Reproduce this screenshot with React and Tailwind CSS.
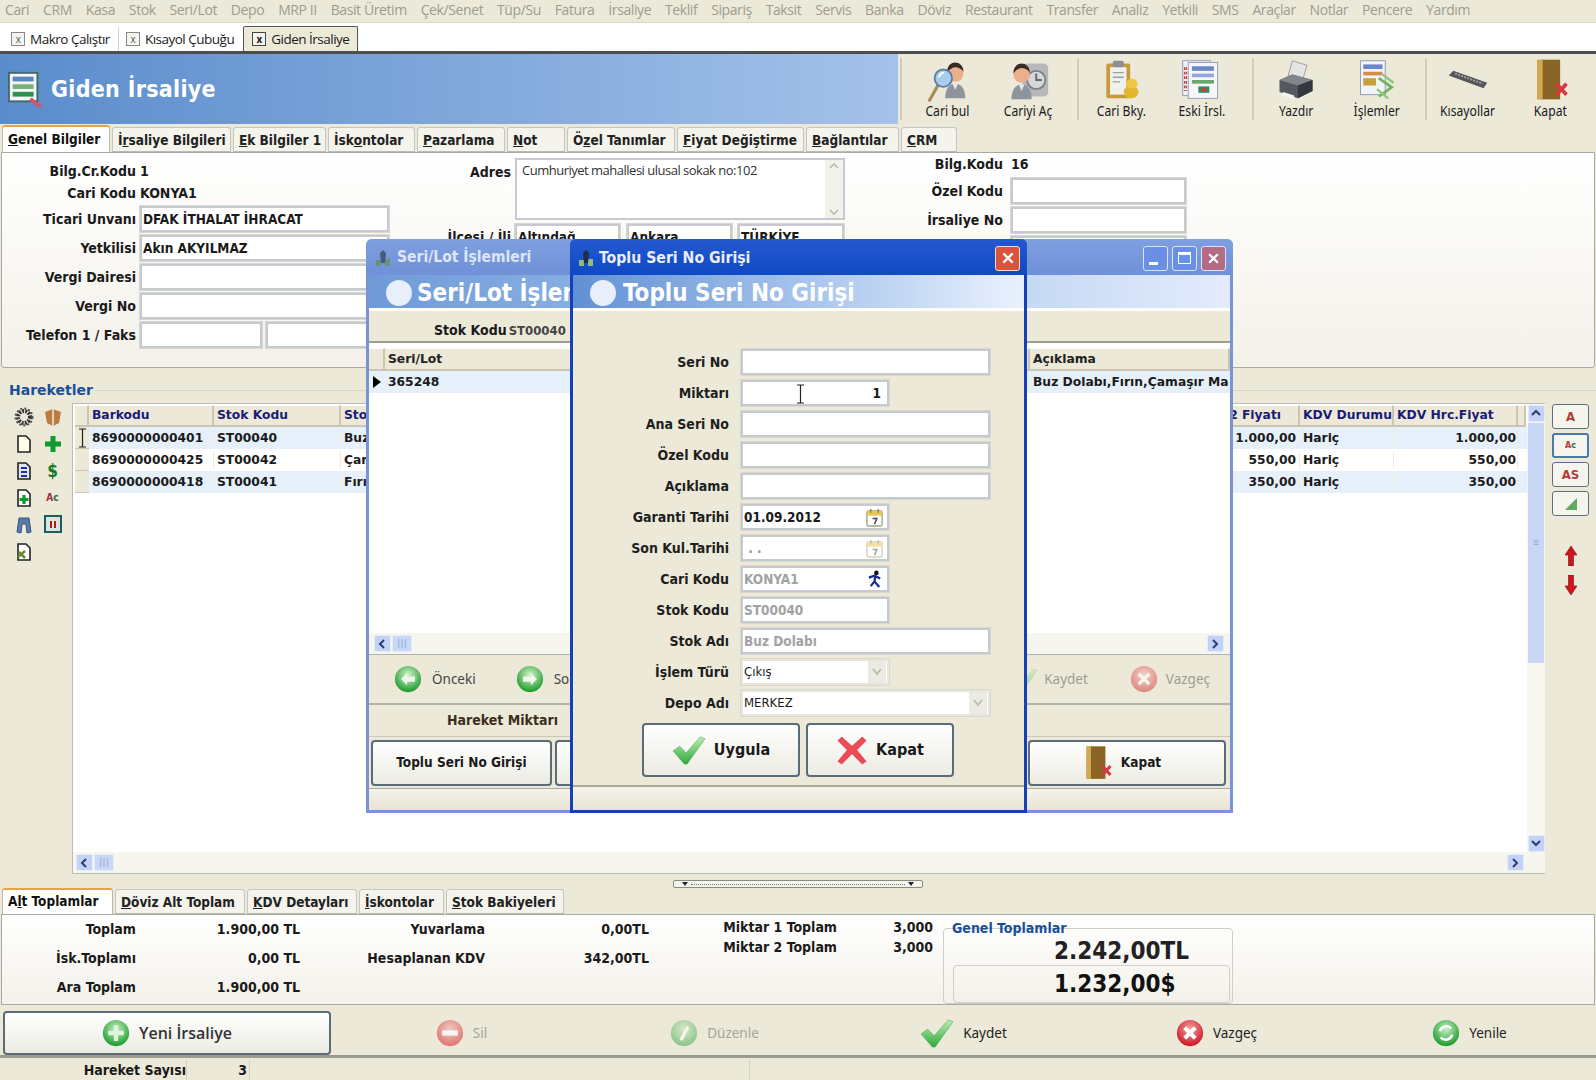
const menus = ["Cari", "CRM", "Kasa", "Stok", "Seri/Lot", "Depo", "MRP II", "Basit Üretim", "Çek/Senet", "Tüp/Su", "Fatura", "İrsaliye", "Teklif", "Sipariş", "Taksit", "Servis", "Banka", "Döviz", "Restaurant", "Transfer", "Analiz", "Yetkili", "SMS", "Araçlar", "Notlar", "Pencere", "Yardım"];

function Person({ x = 0, y = 0 }) {
  return (
    <g transform={`translate(${x} ${y})`}>
      <path d="M14 44c0-11 5-16 11-16s11 5 11 16z" fill="#8e949c" />
      <path d="M22 28l3 7 3-7z" fill="#e9e9e9" />
      <circle cx="25" cy="17" r="9" fill="#eab08c" />
      <path d="M16 16c0-8 5-11 9-11s9 3 9 10c-3-4-6-5-9-5s-6 2-9 6z" fill="#3a2a20" />
    </g>
  );
}

function IconPersonSearch() {
  return (
    <svg viewBox="0 0 48 48" className="w-[44px] h-[44px]">
      <Person x={8} y={0} />
      <path d="M5 46l9-16" stroke="#a98b5c" strokeWidth="3.5" strokeLinecap="round" />
      <circle cx="20" cy="22" r="9.5" fill="#a9cdf0" stroke="#5e7fa5" strokeWidth="2" />
      <path d="M15 21c1-3 3-5 6-5" stroke="#fff" strokeWidth="2" fill="none" />
    </svg>
  );
}

function IconPersonSafe() {
  return (
    <svg viewBox="0 0 48 48" className="w-[44px] h-[44px]">
      <rect x="18" y="6" width="28" height="36" rx="5" fill="#b6b8bc" />
      <circle cx="33" cy="24" r="10" fill="#d5d7da" stroke="#7d8187" strokeWidth="2" />
      <path d="M33 17v7h6" stroke="#666" strokeWidth="2" fill="none" />
      <Person x={-8} y={1} />
    </svg>
  );
}

function IconClipboard() {
  return (
    <svg viewBox="0 0 48 48" className="w-[44px] h-[44px]">
      <rect x="8" y="6" width="26" height="38" rx="2" fill="#c79a3a" />
      <rect x="12" y="10" width="18" height="30" fill="#f1f1ec" />
      <rect x="15" y="3" width="12" height="7" rx="2" fill="#8a8f96" />
      <path d="M15 16h12M15 21h12M15 26h8" stroke="#9aa0a8" strokeWidth="1.5" />
      <ellipse cx="35" cy="37" rx="8" ry="7" fill="#e3b62f" />
      <ellipse cx="36" cy="28" rx="6" ry="5.5" fill="#eec644" />
    </svg>
  );
}

function IconDocs() {
  return (
    <svg viewBox="0 0 48 48" className="w-[44px] h-[44px]">
      <rect x="3" y="3" width="30" height="38" fill="#f1f2f6" stroke="#8d97b5" />
      <rect x="9" y="5" width="32" height="39" fill="#f7f7fb" stroke="#8d97b5" />
      <path d="M5 10v26M7 10v26" stroke="#c63d3d" strokeWidth="1.5" strokeDasharray="3 2" />
      <rect x="13" y="9" width="24" height="5" fill="#6c86c9" />
      <rect x="13" y="17" width="24" height="4" fill="#8fa7dd" />
      <rect x="13" y="24" width="24" height="4" fill="#6aa86a" />
      <rect x="20" y="31" width="12" height="7" fill="#2f8f55" />
      <rect x="23" y="33" width="6" height="3" fill="#d13a3a" />
    </svg>
  );
}

function IconPrinter() {
  return (
    <svg viewBox="0 0 48 48" className="w-[44px] h-[44px]">
      <path d="M20 3l16 5-5 17-16-4z" fill="#e4e4e4" stroke="#999" />
      <path d="M6 24l14-6 22 6v12l-16 8-20-7z" fill="#55585d" />
      <path d="M6 24l20 6 16-6-22-6z" fill="#82868c" />
      <path d="M26 30v14l16-8V24z" fill="#34373b" />
      <path d="M10 37l12 4 0 4-14-4z" fill="#f2f2f2" />
    </svg>
  );
}

function IconTasks() {
  return (
    <svg viewBox="0 0 48 48" className="w-[44px] h-[44px]">
      <rect x="6" y="3" width="27" height="37" fill="#f3f4f9" stroke="#8d97b5" />
      <rect x="9" y="7" width="21" height="5" fill="#6c86c9" />
      <rect x="9" y="15" width="21" height="4" fill="#d58b4c" />
      <rect x="9" y="22" width="14" height="8" fill="#c9a13c" />
      <path d="M26 22l14 10-14 10" stroke="#6fb45e" strokeWidth="3" fill="none" />
      <path d="M30 18l12 9M24 34l12 10" stroke="#8bc87b" strokeWidth="2.5" />
    </svg>
  );
}

function IconKeyboard() {
  return (
    <svg viewBox="0 0 48 48" className="w-[44px] h-[44px]">
      <path d="M3 19l5-5 37 13-4 6z" fill="#55555a" />
      <path d="M10 17l30 11" stroke="#a5a5aa" strokeWidth="2" strokeDasharray="2 1.5" />
    </svg>
  );
}

function IconDoor({ size = "w-[44px] h-[44px]" }) {
  return (
    <svg viewBox="0 0 48 48" className={size}>
      <rect x="10" y="2" width="25" height="43" fill="#b58a3a" />
      <rect x="14" y="2" width="21" height="43" fill="#8a6424" />
      <rect x="10" y="2" width="6" height="43" fill="#d2a850" />
      <path d="M31 28l11 12M42 28L31 40" stroke="#d8373f" strokeWidth="4" />
    </svg>
  );
}

function Ball({ id, from, to, children, size = "w-[28px] h-[28px]" }) {
  return (
    <svg viewBox="0 0 32 32" className={size}>
      <defs>
        <radialGradient id={id} cx="50%" cy="35%" r="65%">
          <stop offset="0%" stopColor={from} />
          <stop offset="100%" stopColor={to} />
        </radialGradient>
      </defs>
      <circle cx="16" cy="16" r="15" fill={`url(#${id})`} />
      {children}
    </svg>
  );
}

function IconCheck({ id, size = "w-[34px] h-[30px]", dim }) {
  return (
    <svg viewBox="0 0 36 32" className={`${size} ${dim ? "opacity-40" : ""}`}>
      <defs>
        <linearGradient id={id} x1="0" y1="0" x2="0" y2="1">
          <stop offset="0%" stopColor="#b9eeb0" />
          <stop offset="100%" stopColor="#2fa83c" />
        </linearGradient>
      </defs>
      <path d="M1 17l7-5 7 7L30 2l5 2-19 27h-3z" fill={`url(#${id})`} stroke="#4aa552" strokeWidth="0.6" />
    </svg>
  );
}

function IconBigX() {
  return (
    <svg viewBox="0 0 32 32" className="w-[32px] h-[30px]">
      <path d="M5 2l11 10L27 2l4 4-10 10 10 12-4 3-11-11L5 31l-4-3 10-12L1 6z" fill="#ee4a55" stroke="#c9343f" strokeWidth="0.6" />
    </svg>
  );
}

function MiniDoc({ fill = "#fff", stroke = "#222", children }) {
  return (
    <svg viewBox="0 0 20 20" className="w-[20px] h-[20px]">
      <path d="M4 2h8l4 4v12H4z" fill={fill} stroke={stroke} strokeWidth="1.6" />
      {children}
    </svg>
  );
}

function Sidebar() {
  return (
    <div className="w-[72px] shrink-0 grid grid-cols-2 content-start justify-items-center gap-y-[7px] pl-[9px] pr-[5px] pt-[4px]">
      <svg viewBox="0 0 20 20" className="w-[20px] h-[20px]">
        <circle cx="10" cy="10" r="6" fill="none" stroke="#333" strokeWidth="4" strokeDasharray="2 1.2" />
        <circle cx="10" cy="10" r="8.5" fill="none" stroke="#555" strokeWidth="2" strokeDasharray="2 2" />
      </svg>
      <svg viewBox="0 0 20 20" className="w-[20px] h-[20px]">
        <path d="M2 5l8-3 8 3-2 11-6 3-6-3z" fill="#b97c45" />
        <path d="M10 2v17" stroke="#ead0ac" strokeWidth="2" />
      </svg>
      <MiniDoc fill="#fffde8" />
      <svg viewBox="0 0 20 20" className="w-[20px] h-[20px]">
        <path d="M10 2v16M2 10h16" stroke="#0d9a2e" strokeWidth="5" />
      </svg>
      <MiniDoc fill="#dfe5fb">
        <path d="M7 7h6M7 11h6M7 15h6" stroke="#1f2f9e" strokeWidth="2" />
      </MiniDoc>
      <div className="font-bold text-[17px] leading-[20px] text-[#157a2b]">$</div>
      <MiniDoc>
        <path d="M10 7v9M5.5 11.5h9" stroke="#0d9a2e" strokeWidth="3.2" />
      </MiniDoc>
      <div className="text-[10px] leading-[20px] font-bold text-[#9b2c3a] whitespace-nowrap">A<span className="text-[#2b6b4a]">c</span></div>
      <svg viewBox="0 0 20 20" className="w-[20px] h-[20px]">
        <path d="M5 3h10l2 14-4 1-1-9H8l-1 9-4-1z" fill="#5c7bab" stroke="#37527c" />
      </svg>
      <div className="w-[18px] h-[18px] border-2 border-[#1c5b60] bg-[#d9e6dd] flex items-center justify-center gap-[2px]">
        <span className="w-[2px] h-[7px] bg-[#b5181b]" />
        <span className="w-[2px] h-[7px] bg-[#b5181b]" />
      </div>
      <MiniDoc>
        <path d="M5 10l6 6M4 15l7-6" stroke="#6c8a2c" strokeWidth="2.5" />
      </MiniDoc>
    </div>
  );
}

function Tab({ active, w, children, h = "h-[27px]" }) {
  return (
    <div
      className={`${w} ${active ? h : "h-[25px]"} shrink-0 flex items-center pl-[5px] text-[13.5px] font-bold whitespace-nowrap overflow-hidden rounded-t-[3px] border ${
        active
          ? "bg-white border-b-0 border-[#b9b9ac] border-t-[#e8a33c] border-t-2 text-[#111] pb-[1px]"
          : "bg-[#f4f3ec] border-[#c4c6c4] border-b-[#b9bbb6] text-[#222] mt-auto pt-[2px]"
      }`}
    >
      {children}
    </div>
  );
}

function Field({ w = "w-[249px]", children, cls = "", right }) {
  return (
    <div className={`${w} h-[26px] shrink-0 bg-white border-2 border-[#c5cad0] outline outline-[#d8d8cf] flex items-center justify-between px-[1px] text-[13.5px] font-bold overflow-hidden whitespace-nowrap ${cls}`}>
      <span className="truncate">{children}</span>
      {right}
    </div>
  );
}

function FormRow({ label, children, labelW = "w-[134px]", h = "h-[29px]" }) {
  return (
    <div className={`${h} flex items-center gap-[4px]`}>
      <div className={`${labelW} shrink-0 text-right text-[14px] font-bold whitespace-nowrap`}>{label}</div>
      {children}
    </div>
  );
}

function IconCalendar({ dim }) {
  return (
    <svg viewBox="0 0 18 20" className={`w-[17px] h-[19px] shrink-0 mr-[3px] ${dim ? "opacity-50" : ""}`}>
      <rect x="1" y="3" width="16" height="16" rx="1.5" fill="#fff" stroke="#a5a77f" strokeWidth="1.5" />
      <rect x="1" y="3" width="16" height="5" fill="#e6c653" />
      <path d="M5 1v4M13 1v4" stroke="#8a8a60" strokeWidth="1.6" />
      <path d="M7 11h4.5L9 17" stroke="#444" strokeWidth="1.5" fill="none" />
    </svg>
  );
}

function IconRunner() {
  return (
    <svg viewBox="0 0 18 20" className="w-[17px] h-[19px] shrink-0 mr-[3px]">
      <circle cx="11" cy="3" r="2.4" fill="#111" />
      <path d="M10 6l-1 6-4 5M9 12l5 6M3 8l6-2 6 3" stroke="#172c8c" strokeWidth="2.4" fill="none" />
    </svg>
  );
}

function Chevron() {
  return (
    <div className="w-[18px] h-[22px] shrink-0 bg-[#ecebe3] flex items-center justify-center text-[#b9bcb3]">
      <svg viewBox="0 0 10 8" className="w-[10px] h-[8px]">
        <path d="M1 1l4 5 4-5" stroke="currentColor" strokeWidth="1.8" fill="none" />
      </svg>
    </div>
  );
}

function TextCursor({ cls = "" }) {
  return (
    <svg viewBox="0 0 9 20" className={`w-[9px] h-[20px] ${cls}`}>
      <path d="M1 1h3l.5 1L5 1h3M4.5 2v16M1 19h3l.5-1 .5 1h3" stroke="#222" strokeWidth="1.2" fill="none" />
    </svg>
  );
}

function Cell({ w, right, cls = "", children }) {
  return (
    <div className={`${w} shrink-0 px-[3px] overflow-hidden whitespace-nowrap border-r border-[#efece0] ${right ? "text-right" : ""} ${cls}`}>
      {children}
    </div>
  );
}

function Hdr({ w, children, cls = "" }) {
  return (
    <div className={`${w} shrink-0 h-full bg-[#ece9d8] border-r-2 border-b-2 border-[#c9c6b4] border-t border-t-white pl-[3px] flex items-center overflow-hidden whitespace-nowrap ${cls}`}>
      {children}
    </div>
  );
}

const rows = [
  { bar: "8690000000401", kod: "ST00040", ad: "Buz Dolabı", fiyat: "1.000,00", bg: "bg-[#e6f0fa]", cursor: true },
  { bar: "8690000000425", kod: "ST00042", ad: "Çamaşır Makinesi", fiyat: "550,00", bg: "bg-white" },
  { bar: "8690000000418", kod: "ST00041", ad: "Fırın", fiyat: "350,00", bg: "bg-[#e6f0fa]" },
];

function ScrollArrow({ dir }) {
  const d = { left: "M6 1L2 5l4 4", right: "M2 1l4 4-4 4", up: "M1 6l4-4 4 4", down: "M1 2l4 4 4-4" }[dir];
  return (
    <div className="w-[17px] h-[17px] shrink-0 rounded-[2px] bg-[#c3d3f5] border border-[#e4ecfb] flex items-center justify-center">
      <svg viewBox="0 0 10 10" className="w-[10px] h-[10px]">
        <path d={d} stroke="#2a3f78" strokeWidth="2" fill="none" />
      </svg>
    </div>
  );
}

function Thumb() {
  return (
    <div className="w-[20px] h-[17px] shrink-0 rounded-[2px] bg-[#c9d8f6] border border-[#e4ecfb] flex items-center justify-center text-[9px] leading-none text-[#9bb0dc]">|||</div>
  );
}

function Grid() {
  return (
    <div className="flex-1 min-w-0 flex flex-col bg-white border border-[#b9bdb8] border-r-0 font-['DejaVu_Sans',sans-serif] text-[12.3px] font-bold">
      <div className="flex flex-1 min-h-0">
        <div className="flex-1 min-w-0 pl-[2px] pt-[1px] overflow-hidden">
          <div className="h-[22px] flex text-[#1a1a78]">
            <Hdr w="w-[14px]" />
            <Hdr w="w-[125px]">Barkodu</Hdr>
            <Hdr w="w-[127px]">Stok Kodu</Hdr>
            <Hdr w="w-[861px]">Stok Adı</Hdr>
            <Hdr w="w-[98px]" cls="justify-end pr-[17px]">2 Fiyatı</Hdr>
            <Hdr w="w-[94px]">KDV Durumu</Hdr>
            <Hdr w="w-[124px]">KDV Hrc.Fiyat</Hdr>
            <Hdr w="w-[8px]" />
          </div>
          {rows.map((r) => (
            <div key={r.bar} className={`h-[22px] flex items-center text-[#1b1b1b] ${r.bg}`}>
              <div className="w-[14px] h-full shrink-0 bg-[#ece9d8] border-b border-[#c9c6b4] flex items-center justify-center">
                {r.cursor && <TextCursor />}
              </div>
              <Cell w="w-[125px]">{r.bar}</Cell>
              <Cell w="w-[127px]">{r.kod}</Cell>
              <Cell w="w-[861px]">{r.ad}</Cell>
              <Cell w="w-[98px]" right>{r.fiyat}</Cell>
              <Cell w="w-[94px]">Hariç</Cell>
              <Cell w="w-[124px]" right cls="pr-[1px]">{r.fiyat}</Cell>
            </div>
          ))}
        </div>
        <div className="w-[18px] shrink-0 bg-[#f7f6f0] flex flex-col items-center pt-[1px]">
          <ScrollArrow dir="up" />
          <div className="w-[16px] h-[240px] my-[1px] bg-[#c7d7f5] flex items-center justify-center text-[#9bb0dc] text-[8px]">≡</div>
          <div className="flex-1" />
          <ScrollArrow dir="down" />
        </div>
      </div>
      <div className="h-[21px] shrink-0 bg-[#f6f5ee] flex items-center pl-[3px] pr-[21px] gap-[1px]">
        <ScrollArrow dir="left" />
        <Thumb />
        <div className="flex-1" />
        <ScrollArrow dir="right" />
      </div>
    </div>
  );
}

function SideButton({ children, focus }) {
  return (
    <div className={`w-[37px] h-[25px] rounded-[3px] bg-[#f5f5ee] border ${focus ? "border-2 border-[#4b79b0]" : "border-[#5f6f80]"} flex items-center justify-center font-bold text-[13px] text-[#b33a3a]`}>
      {children}
    </div>
  );
}

function ToolItem({ icon, label, w }) {
  return (
    <div className={`${w} shrink-0 flex flex-col items-center`}>
      <div className="h-[44px] flex items-center">{icon}</div>
      <div className="text-[13.5px] leading-[18px] text-[#1a1a1a] whitespace-nowrap font-['Noto_Sans',sans-serif] scale-x-90">{label}</div>
    </div>
  );
}

function ActionBtn({ icon, label, dim }) {
  return (
    <div className={`flex items-center justify-center gap-[9px] ${dim ? "pl-[8px]" : ""}`}>
      {icon}
      <span className={`text-[13.5px] font-['Noto_Sans',sans-serif] ${dim ? "text-[#a5a59a]" : "text-[#222]"}`}>{label}</span>
    </div>
  );
}

function BevelBtn({ cls, children }) {
  return (
    <div className={`rounded-[4px] border-2 border-[#5b6b78] bg-gradient-to-b from-white to-[#ecebe3] flex items-center justify-center ${cls}`}>
      {children}
    </div>
  );
}

function SeriLotWindow() {
  return (
    <div className="absolute left-[366px] top-[239px] w-[867px] h-[574px] flex flex-col rounded-t-[6px] bg-[#ece9d8] border-[3px] border-t-0 border-[#7b93d6] font-bold">
      <div className="h-[36px] shrink-0 -mx-[3px] rounded-t-[6px] bg-gradient-to-b from-[#7e9fe0] to-[#7090d8] flex items-center pl-[7px] pt-[2px] gap-[4px]">
        <svg viewBox="0 0 20 20" className="w-[20px] h-[20px] opacity-80">
          <path d="M3 18v-6h5v6zM12 18v-7h5v7z" fill="#6e8f5e" />
          <path d="M10 2l3 3-1 10H8L7 5z" fill="#3b4b6a" />
        </svg>
        <span className="text-[15.5px] text-[#dde6f8]">Seri/Lot İşlemleri</span>
        <div className="ml-auto flex gap-[4px] pr-[7px]">
          <div className="w-[25px] h-[25px] rounded-[3px] bg-[#6a8fe6] border border-[#dbe4f8] flex items-end p-[5px]"><span className="w-[9px] h-[3px] bg-white" /></div>
          <div className="w-[25px] h-[25px] rounded-[3px] bg-[#6a8fe6] border border-[#dbe4f8] flex items-center justify-center"><span className="w-[13px] h-[12px] border border-t-[3px] border-white" /></div>
          <div className="w-[25px] h-[25px] rounded-[3px] bg-[#b26c85] border border-[#dbe4f8] flex items-center justify-center">
            <svg viewBox="0 0 12 12" className="w-[13px] h-[13px]"><path d="M2 2l8 8M10 2l-8 8" stroke="#fff" strokeWidth="2" /></svg>
          </div>
        </div>
      </div>
      <div className="h-[33px] shrink-0 bg-gradient-to-r from-[#6e9bd8] via-[#a4c3ec] to-[#e4ecfc] flex items-center pl-[17px] pt-[3px] gap-[5px] text-white text-[24px]">
        <span className="w-[26px] h-[26px] rounded-full bg-[#e8eefa]" />
        Seri/Lot İşlemleri
      </div>
      <div className="h-[3px] shrink-0 bg-white" />
      <div className="h-[32px] shrink-0 flex items-center pl-[65px] pt-[9px] gap-[2px] text-[14px] border-b-2 border-[#9d9d92]">
        Stok Kodu <span className="text-[13px] text-[#444]">ST00040</span>
      </div>
      <div className="flex-1 min-h-0 bg-white flex flex-col pt-[2px] font-['DejaVu_Sans',sans-serif] text-[12.3px] text-[#1b1b1b]">
        <div className="h-[26px] flex text-[#222] pt-[3px]">
          <Hdr w="w-[16px]" />
          <Hdr w="w-[645px]">Seri/Lot</Hdr>
          <Hdr w="flex-1">Açıklama</Hdr>
        </div>
        <div className="h-[22px] flex items-center bg-[#e6f0fa]">
          <div className="w-[16px] shrink-0 flex justify-center">
            <span className="w-0 h-0 border-y-[6px] border-y-transparent border-l-[8px] border-l-black" />
          </div>
          <div className="w-[645px] shrink-0 pl-[3px]">365248</div>
          <div className="flex-1 min-w-0 pl-[3px] whitespace-nowrap">Buz Dolabı,Fırın,Çamaşır Ma</div>
        </div>
        <div className="flex-1" />
        <div className="h-[22px] bg-[#f6f5ee] flex items-center pl-[5px] pr-[6px] gap-[1px] border-b border-[#aeb3b3]">
          <ScrollArrow dir="left" />
          <Thumb />
          <div className="flex-1" />
          <ScrollArrow dir="right" />
        </div>
      </div>
      <div className="h-[50px] shrink-0 flex items-center border-b-2 border-[#b3b2a6] font-normal text-[13.5px] font-['Noto_Sans',sans-serif] text-[#444]">
        <div className="w-[25px]" />
        <Ball id="prev" from="#d6f3cd" to="#179a2a"><path d="M8 16l7-7v4h9v6h-9v4z" fill="#eef8ea" /></Ball>
        <span className="ml-[10px]">Önceki</span>
        <div className="w-[40px]" />
        <Ball id="next" from="#d6f3cd" to="#179a2a"><path d="M24 16l-7-7v4H8v6h9v4z" fill="#eef8ea" /></Ball>
        <span className="ml-[10px]">Sonraki</span>
        <div className="flex-1" />
        <IconCheck id="ck2" size="w-[26px] h-[24px]" dim />
        <span className="ml-[6px] text-[#9d9d92]">Kaydet</span>
        <div className="w-[42px]" />
        <div className="opacity-50"><Ball id="vz2" from="#f5b4b4" to="#d22a2a"><path d="M10 10l12 12M22 10L10 22" stroke="#fff" strokeWidth="4" /></Ball></div>
        <span className="ml-[8px] mr-[20px] text-[#9d9d92]">Vazgeç</span>
      </div>
      <div className="h-[31px] shrink-0 flex items-center pl-[78px] text-[14px] text-[#3b2f1c]">Hareket Miktarı</div>
      <div className="h-[52px] shrink-0 flex items-center px-[2px] gap-[3px] font-['DejaVu_Sans_Condensed',sans-serif] border-t border-[#c9c8bb]">
        <BevelBtn cls="w-[181px] h-[46px] border-[#3b6ea8] text-[13.5px]">Toplu Seri No Girişi</BevelBtn>
        <BevelBtn cls="w-[100px] h-[46px]"> </BevelBtn>
        <div className="flex-1" />
        <BevelBtn cls="w-[198px] h-[46px] text-[13.5px] gap-[6px] pr-[14px] mr-[2px]"><IconDoor size="w-[36px] h-[36px]" />Kapat</BevelBtn>
      </div>
      <div className="h-[22px] shrink-0 border-t border-[#aaa99e] bg-gradient-to-b from-[#f4f3ec] to-[#e7e4d3]" />
    </div>
  );
}

function DialogRow({ label, children }) {
  return (
    <div className="h-[26px] flex items-center">
      <div className="w-[156px] shrink-0 text-right text-[14px] font-bold text-[#1e1e1e] whitespace-nowrap">{label}</div>
      <div className="ml-[12px]">{children}</div>
    </div>
  );
}

function TopluWindow() {
  return (
    <div className="absolute left-[570px] top-[239px] w-[457px] h-[574px] flex flex-col rounded-t-[6px] bg-[#ece9d8] border-[3px] border-t-0 border-[#1541b8]">
      <div className="h-[36px] shrink-0 -mx-[3px] rounded-t-[6px] bg-gradient-to-b from-[#2458cf] to-[#0f49c4] flex items-center pl-[6px] pr-[7px] pt-[2px] gap-[3px]">
        <svg viewBox="0 0 20 20" className="w-[20px] h-[20px]">
          <path d="M3 18v-6h5v6zM12 18v-7h5v7z" fill="#8fbc7e" />
          <path d="M10 2l3 3-1 10H8L7 5z" fill="#1f2c4a" />
        </svg>
        <span className="text-[15.7px] font-bold text-[#e8eefc]">Toplu Seri No Girişi</span>
        <div className="ml-auto w-[25px] h-[25px] rounded-[3px] bg-[#d8553c] border border-[#f4d8cc] flex items-center justify-center">
          <svg viewBox="0 0 12 12" className="w-[14px] h-[14px]"><path d="M2 2l8 8M10 2l-8 8" stroke="#fff" strokeWidth="2" /></svg>
        </div>
      </div>
      <div className="h-[33px] shrink-0 bg-gradient-to-r from-[#6191d4] via-[#a4c3ec] to-[#eaf1fd] flex items-center pl-[17px] pt-[3px] gap-[7px] text-white text-[24px] font-bold">
        <span className="w-[26px] h-[26px] rounded-full bg-[#e8eefa]" />
        Toplu Seri No Girişi
      </div>
      <div className="h-[3px] shrink-0 bg-white" />
      <div className="flex-1 flex flex-col gap-[5px] pt-[38px]">
        <DialogRow label="Seri No"><Field /></DialogRow>
        <DialogRow label="Miktarı">
          <div className="relative">
            <Field w="w-[148px]" cls="justify-end pr-[6px]">1</Field>
            <TextCursor cls="absolute left-[55px] top-[4px]" />
          </div>
        </DialogRow>
        <DialogRow label="Ana Seri No"><Field /></DialogRow>
        <DialogRow label="Özel Kodu"><Field /></DialogRow>
        <DialogRow label="Açıklama"><Field /></DialogRow>
        <DialogRow label="Garanti Tarihi"><Field w="w-[148px]" right={<IconCalendar />}>01.09.2012</Field></DialogRow>
        <DialogRow label="Son Kul.Tarihi"><Field w="w-[148px]" cls="text-[#999]" right={<IconCalendar dim />}>&nbsp;. .</Field></DialogRow>
        <DialogRow label="Cari Kodu"><Field w="w-[148px]" cls="text-[#a2a2a2]" right={<IconRunner />}>KONYA1</Field></DialogRow>
        <DialogRow label="Stok Kodu"><Field w="w-[148px]" cls="text-[#a2a2a2]">ST00040</Field></DialogRow>
        <DialogRow label="Stok Adı"><Field cls="text-[#a2a2a2]">Buz Dolabı</Field></DialogRow>
        <DialogRow label="İşlem Türü"><Field w="w-[148px]" cls="font-normal text-[13px] border-[#e6e6dd]" right={<Chevron />}>Çıkış</Field></DialogRow>
        <DialogRow label="Depo Adı"><Field cls="font-normal text-[13px] border-[#e6e6dd]" right={<Chevron />}>MERKEZ</Field></DialogRow>
        <div className="flex gap-[6px] pl-[69px] mt-[2px]">
          <BevelBtn cls="w-[158px] h-[54px] gap-[8px] text-[16px] font-bold"><IconCheck id="ck1" />Uygula</BevelBtn>
          <BevelBtn cls="w-[148px] h-[54px] gap-[8px] text-[16px] font-bold"><IconBigX />Kapat</BevelBtn>
        </div>
      </div>
      <div className="h-[25px] shrink-0 border-t-2 border-[#a9a89c] bg-gradient-to-b from-[#f4f3ec] to-[#e7e4d3]" />
    </div>
  );
}

export default function App() {
  return (
    <div className="relative w-[1596px] h-[1080px] overflow-hidden flex flex-col bg-[#ece9d8] text-[#1a1a1a] font-['DejaVu_Sans_Condensed','DejaVu_Sans',sans-serif]">

      {/* menu */}
      <div className="h-[23px] shrink-0 flex items-center gap-[13.85px] pl-[5px] pb-[3px] text-[14px] text-[#9d9d90] whitespace-nowrap border-b border-[#d8d6c6] font-['Open_Sans',sans-serif]">
        {menus.map((m) => <span key={m} className="tracking-[-0.4px]">{m}</span>)}
      </div>

      {/* acik pencereler */}
      <div className="h-[31px] shrink-0 bg-white flex items-end pl-[11px] border-b-[3px] border-[#4d4d4d] text-[13.5px] font-['Open_Sans',sans-serif] tracking-[-0.5px]">
        <div className="h-[24px] flex items-center gap-[5px] pr-[8px] border-r border-[#d5d5cc]">
          <span className="w-[14px] h-[14px] border border-[#888] bg-[#f5f5f0] text-[10px] leading-[12px] text-center text-[#555]">x</span>Makro Çalıştır
        </div>
        <div className="h-[24px] flex items-center gap-[5px] pl-[7px] pr-[9px]">
          <span className="w-[14px] h-[14px] border border-[#888] bg-[#f5f5f0] text-[10px] leading-[12px] text-center text-[#555]">x</span>Kısayol Çubuğu
        </div>
        <div className="h-[25px] flex items-center gap-[5px] px-[8px] bg-[#ece9d8] border border-b-0 border-[#555] rounded-t-[2px]">
          <span className="w-[14px] h-[14px] border border-[#444] bg-[#f5f5f0] text-[10px] leading-[12px] text-center font-bold">x</span>Giden İrsaliye
        </div>
      </div>

      {/* baslik + toolbar */}
      <div className="h-[70px] shrink-0 flex">
        <div className="w-[898px] shrink-0 bg-gradient-to-r from-[#5a8ccb] to-[#a4c2ea] flex items-center pl-[7px] gap-[6px]">
          <svg viewBox="0 0 40 40" className="w-[38px] h-[38px]">
            <rect x="2" y="3" width="30" height="30" fill="#f2f4f8" stroke="#3f6a66" strokeWidth="2" />
            <rect x="6" y="7" width="22" height="5" fill="#5a86c0" />
            <rect x="6" y="15" width="22" height="5" fill="#77b27a" />
            <rect x="6" y="23" width="22" height="5" fill="#2d8f4e" />
            <path d="M26 29l11 9-3 2-11-8z" fill="#d8506a" />
          </svg>
          <span className="text-[23px] font-bold text-white tracking-[0.3px]">Giden İrsaliye</span>
        </div>
        <div className="flex-1 flex items-center">
          <div className="w-[2px] h-[62px] bg-[#d0cdbb] ml-[2px]" />
          <ToolItem w="w-[90px]" icon={<IconPersonSearch />} label="Cari bul" />
          <ToolItem w="w-[72px]" icon={<IconPersonSafe />} label="Cariyi Aç" />
          <div className="w-[2px] h-[62px] bg-[#d0cdbb] ml-[13px]" />
          <ToolItem w="w-[84px]" icon={<IconClipboard />} label="Cari Bky." />
          <ToolItem w="w-[78px]" icon={<IconDocs />} label="Eski İrsl." />
          <div className="w-[2px] h-[62px] bg-[#d0cdbb] ml-[11px]" />
          <ToolItem w="w-[84px]" icon={<IconPrinter />} label="Yazdır" />
          <ToolItem w="w-[78px]" icon={<IconTasks />} label="İşlemler" />
          <div className="w-[2px] h-[62px] bg-[#d0cdbb] ml-[9px]" />
          <ToolItem w="w-[82px]" icon={<IconKeyboard />} label="Kısayollar" />
          <ToolItem w="w-[82px]" icon={<IconDoor />} label="Kapat" />
        </div>
      </div>

      {/* sekmeler */}
      <div className="h-[27px] shrink-0 flex items-end pl-[2px] gap-[2px] mt-[1px]">
        <Tab active w="w-[108px]"><span className="underline">G</span>enel Bilgiler</Tab>
        <Tab w="w-[119px]">İ<span className="underline">r</span>saliye Bilgileri</Tab>
        <Tab w="w-[93px]"><span className="underline">E</span>k Bilgiler 1</Tab>
        <Tab w="w-[87px]">İsk<span className="underline">o</span>ntolar</Tab>
        <Tab w="w-[88px]"><span className="underline">P</span>azarlama</Tab>
        <Tab w="w-[58px]"><span className="underline">N</span>ot</Tab>
        <Tab w="w-[108px]">Ö<span className="underline">z</span>el Tanımlar</Tab>
        <Tab w="w-[127px]"><span className="underline">F</span>iyat Değiştirme</Tab>
        <Tab w="w-[93px]"><span className="underline">B</span>ağlantılar</Tab>
        <Tab w="w-[56px]"><span className="underline">C</span>RM</Tab>
      </div>

      {/* genel bilgiler */}
      <div className="h-[216px] shrink-0 mx-[1px] bg-gradient-to-b from-white to-[#f3f1e9] border border-[#a8aaa4] rounded-b-[3px] flex relative overflow-hidden">
        <div className="w-[440px] shrink-0 pt-[5px] flex flex-col">
          <FormRow label="Bilg.Cr.Kodu" h="h-[26px]"><span className="text-[14px] font-bold">1</span></FormRow>
          <FormRow label="Cari Kodu" h="h-[18px]"><span className="text-[14px] font-bold">KONYA1</span></FormRow>
          <div className="h-[2.5px]" />
          <FormRow label="Ticari Unvanı"><Field>DFAK İTHALAT İHRACAT</Field></FormRow>
          <FormRow label="Yetkilisi"><Field>Akın AKYILMAZ</Field></FormRow>
          <FormRow label="Vergi Dairesi"><Field /></FormRow>
          <FormRow label="Vergi No"><Field /></FormRow>
          <FormRow label="Telefon 1 / Faks">
            <Field w="w-[122px]" />
            <Field w="w-[122px]" />
          </FormRow>
        </div>
        <div className="w-[403px] shrink-0 pt-[5px] flex flex-col gap-[4px]">
          <div className="flex items-start gap-[4px]">
            <div className="w-[69px] shrink-0 text-right text-[14px] font-bold pt-[4px]">Adres</div>
            <div className="flex-1 h-[62px] bg-white border-2 border-[#c5cad0] flex justify-between">
              <div className="pl-[5px] pt-[1px] text-[13px] text-[#333] font-['Open_Sans',sans-serif] tracking-[-0.5px]">Cumhuriyet mahallesi ulusal sokak no:102</div>
              <div className="w-[18px] shrink-0 bg-[#f2f2ea] flex flex-col justify-between py-[2px] items-center text-[#bcbcb0]">
                <svg viewBox="0 0 10 8" className="w-[10px] h-[8px]"><path d="M1 6l4-4 4 4" stroke="currentColor" strokeWidth="1.6" fill="none" /></svg>
                <svg viewBox="0 0 10 8" className="w-[10px] h-[8px]"><path d="M1 2l4 4 4-4" stroke="currentColor" strokeWidth="1.6" fill="none" /></svg>
              </div>
            </div>
          </div>
          <div className="flex items-center gap-[4px]">
            <div className="w-[69px] shrink-0 text-right text-[14px] font-bold whitespace-nowrap">İlçesi / İli</div>
            <Field w="w-[105px]">Altındağ</Field>
            <Field w="w-[105px]" cls="ml-[3px]">Ankara</Field>
            <Field w="w-[106px]" cls="ml-[2px]">TÜRKİYE</Field>
          </div>
        </div>
        <div className="pl-[68px] flex flex-col gap-[3px]">
          <FormRow label="Bilg.Kodu" labelW="w-[90px]" h="h-[22px]"><span className="ml-[4px] text-[14px] font-bold">16</span></FormRow>
          <FormRow label="Özel Kodu" labelW="w-[90px]" h="h-[26px]"><Field w="w-[175px]" cls="ml-[4px]" /></FormRow>
          <FormRow label="İrsaliye No" labelW="w-[90px]" h="h-[26px]"><Field w="w-[175px]" cls="ml-[4px]" /></FormRow>
          <FormRow label=" " labelW="w-[90px]" h="h-[26px]"><Field w="w-[175px]" cls="ml-[4px]" /></FormRow>
        </div>
      </div>

      {/* hareketler */}
      <div className="h-[35px] shrink-0 flex items-end pl-[9px] pb-[6px] gap-[2px]">
        <span className="text-[14px] font-bold text-[#1a4f9c] leading-none font-['DejaVu_Sans',sans-serif]">Hareketler</span>
        <div className="flex-1 h-[1px] bg-[#d6d4c4] mb-[6px]" />
      </div>
      <div className="flex-1 min-h-0 flex pr-[7px]">
        <Sidebar />
        <Grid />
        <div className="w-[44px] shrink-0 flex flex-col items-end gap-[4px] pt-[1px]">
          <SideButton>A</SideButton>
          <SideButton focus><span className="text-[9px]">A<span className="text-[#2b6b4a]">c</span></span></SideButton>
          <SideButton>AS</SideButton>
          <SideButton>
            <svg viewBox="0 0 14 14" className="w-[14px] h-[14px]"><path d="M13 1v12H1z" fill="#5faa5f" /></svg>
          </SideButton>
          <div className="w-[37px] flex flex-col items-center gap-[9px] mt-[26px]">
            <svg viewBox="0 0 12 20" className="w-[12px] h-[20px]"><path d="M6 0l6 9H8.5v11h-5V9H0z" fill="#d0141b" stroke="#7a0a0f" strokeWidth="0.6" /></svg>
            <svg viewBox="0 0 12 20" className="w-[12px] h-[20px]"><path d="M6 20L0 11h3.5V0h5v11H12z" fill="#d0141b" stroke="#7a0a0f" strokeWidth="0.6" /></svg>
          </div>
        </div>
      </div>

      {/* ayirici */}
      <div className="h-[14px] shrink-0 flex items-center justify-center pt-[6px]">
        <div className="w-[250px] h-[8px] bg-[#f4f3ec] border border-[#8b8b80] rounded-[2px] flex items-center justify-between px-[8px] text-[#333]">
          <span className="w-0 h-0 border-x-[3px] border-x-transparent border-t-[4px] border-t-[#223]" />
          <span className="flex-1 mx-[3px] border-t border-dotted border-[#777]" />
          <span className="w-0 h-0 border-x-[3px] border-x-transparent border-t-[4px] border-t-[#223]" />
        </div>
      </div>

      {/* alt sekmeler */}
      <div className="h-[26px] shrink-0 flex items-end pl-[2px] gap-[2px]">
        <Tab active w="w-[111px]" h="h-[26px]">A<span className="underline">l</span>t Toplamlar</Tab>
        <Tab w="w-[130px]"><span className="underline">D</span>öviz Alt Toplam</Tab>
        <Tab w="w-[110px]"><span className="underline">K</span>DV Detayları</Tab>
        <Tab w="w-[85px]"><span className="underline">İ</span>skontolar</Tab>
        <Tab w="w-[118px]"><span className="underline">S</span>tok Bakiyeleri</Tab>
      </div>

      {/* toplamlar */}
      <div className="h-[91px] shrink-0 mx-[1px] bg-gradient-to-b from-white to-[#f3f1e9] border border-[#a8aaa4] flex text-[14px] font-bold">
        <div className="w-[300px] shrink-0 grid grid-cols-[134px_164px] grid-rows-3 items-center pb-[2px]">
          <div className="text-right">Toplam</div><div className="text-right">1.900,00 TL</div>
          <div className="text-right">İsk.Toplamı</div><div className="text-right">0,00 TL</div>
          <div className="text-right">Ara Toplam</div><div className="text-right">1.900,00 TL</div>
        </div>
        <div className="w-[347px] shrink-0 grid grid-cols-[183px_164px] grid-rows-3 items-center pb-[2px]">
          <div className="text-right">Yuvarlama</div><div className="text-right">0,00TL</div>
          <div className="text-right">Hesaplanan KDV</div><div className="text-right">342,00TL</div>
        </div>
        <div className="w-[284px] shrink-0 pt-[3px] grid grid-cols-[188px_96px] auto-rows-[19.5px] items-center">
          <div className="text-right">Miktar 1 Toplam</div><div className="text-right">3,000</div>
          <div className="text-right">Miktar 2 Toplam</div><div className="text-right">3,000</div>
        </div>
        <div className="relative ml-[10px] mt-[13px] w-[290px] h-[76px] border border-[#cfcfc6] rounded-[4px] flex flex-col">
          <span className="absolute -top-[8px] left-[8px] text-[14px] text-[#1a4f9c] leading-none">Genel Toplamlar</span>
          <div className="h-[36px] flex items-center pl-[110px] text-[24px] text-[#222] pt-[7px]">2.242,00TL</div>
          <div className="ml-[9px] mr-[2px] flex-1 mb-[2px] border border-[#cfcfc6] rounded-[4px] flex items-center pl-[100px] text-[24px] text-[#111]">1.232,00$</div>
        </div>
      </div>

      {/* aksiyonlar */}
      <div className="h-[51px] shrink-0 mt-[2px] flex items-center pl-[3px] pt-[4px] border-b-[3px] border-[#9a9a8e]">
        <BevelBtn cls="w-[328px] h-[44px] gap-[9px] text-[16px] font-normal">
          <Ball id="yeni" from="#c8f0c0" to="#189a2c"><path d="M16 7v18M7 16h18" stroke="#dff5da" strokeWidth="5" /></Ball>
          <span className="font-['Open_Sans',sans-serif] font-semibold text-[#333]">Yeni İrsaliye</span>
        </BevelBtn>
        <div className="flex-1 grid grid-cols-5">
          <ActionBtn dim label="Sil" icon={<div className="opacity-60"><Ball id="sil" from="#f5b4b4" to="#d22a2a"><rect x="7" y="13" width="18" height="6" fill="#fff" /></Ball></div>} />
          <ActionBtn dim label="Düzenle" icon={<div className="opacity-60"><Ball id="dz" from="#c8ecc0" to="#4da858"><path d="M11 23l8-15 3 2-8 15z" fill="#fff" /></Ball></div>} />
          <ActionBtn label="Kaydet" icon={<IconCheck id="ck3" />} />
          <ActionBtn label="Vazgeç" icon={<Ball id="vz" from="#f3a4a4" to="#cc1420"><path d="M10 10l12 12M22 10L10 22" stroke="#fff" strokeWidth="4.5" /></Ball>} />
          <ActionBtn label="Yenile" icon={<Ball id="yn" from="#c8f0c0" to="#189a2c"><path d="M9 14a7.5 7.5 0 0 1 13-3M23 18a7.5 7.5 0 0 1-13 3" stroke="#fff" strokeWidth="3" fill="none" /></Ball>} />
        </div>
      </div>

      {/* durum cubugu */}
      <div className="h-[22px] shrink-0 flex items-center pt-[2px] text-[14px] font-bold">
        <div className="w-[186px] shrink-0 text-right">Hareket Sayısı</div>
        <div className="w-[64px] shrink-0 pr-[2px] border-l border-[#d4d2c2] border-r h-full flex items-center justify-end">3</div>
        <div className="w-[500px] shrink-0 h-full border-r border-[#d4d2c2]" />
      </div>

      <SeriLotWindow />
      <TopluWindow />
    </div>
  );
}
